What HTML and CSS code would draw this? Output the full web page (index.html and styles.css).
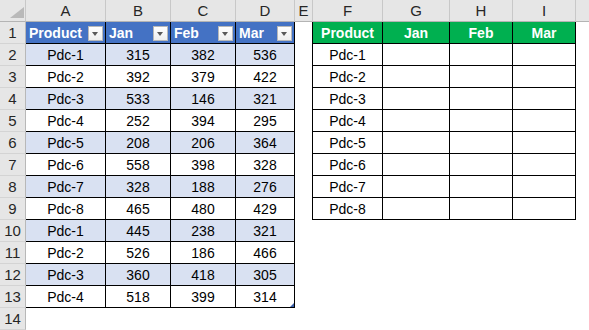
FILE: index.html
```html
<!DOCTYPE html>
<html>
<head>
<meta charset="utf-8">
<link rel="stylesheet" href="styles.css">
</head>
<body>
<div class="sheet">
  <!-- header row -->
  <div class="ch corner"><svg class="tri" width="14" height="11" viewBox="0 0 14 11"><polygon points="14,0 14,11 0,11" fill="#b9b9b9"/></svg></div>
  <div class="ch">A</div><div class="ch">B</div><div class="ch">C</div><div class="ch">D</div><div class="ch">E</div>
  <div class="ch">F</div><div class="ch">G</div><div class="ch">H</div><div class="ch">I</div><div class="ch last"></div>

  <!-- row 1 -->
  <div class="rh">1</div>
  <div class="th">Product<span class="fb"></span></div>
  <div class="th">Jan<span class="fb"></span></div>
  <div class="th">Feb<span class="fb"></span></div>
  <div class="th">Mar<span class="fb"></span></div>
  <div class="e edge"></div>
  <div class="gh">Product</div><div class="gh">Jan</div><div class="gh">Feb</div><div class="gh">Mar</div>
  <div class="e"></div>

  <div class="rh">2</div>
  <div class="c b">Pdc-1</div><div class="c b">315</div><div class="c b">382</div><div class="c b">536</div>
  <div class="e edge"></div><div class="r">Pdc-1</div><div class="r"></div><div class="r"></div><div class="r"></div><div class="e"></div>

  <div class="rh">3</div>
  <div class="c">Pdc-2</div><div class="c">392</div><div class="c">379</div><div class="c">422</div>
  <div class="e edge"></div><div class="r">Pdc-2</div><div class="r"></div><div class="r"></div><div class="r"></div><div class="e"></div>

  <div class="rh">4</div>
  <div class="c b">Pdc-3</div><div class="c b">533</div><div class="c b">146</div><div class="c b">321</div>
  <div class="e edge"></div><div class="r">Pdc-3</div><div class="r"></div><div class="r"></div><div class="r"></div><div class="e"></div>

  <div class="rh">5</div>
  <div class="c">Pdc-4</div><div class="c">252</div><div class="c">394</div><div class="c">295</div>
  <div class="e edge"></div><div class="r">Pdc-4</div><div class="r"></div><div class="r"></div><div class="r"></div><div class="e"></div>

  <div class="rh">6</div>
  <div class="c b">Pdc-5</div><div class="c b">208</div><div class="c b">206</div><div class="c b">364</div>
  <div class="e edge"></div><div class="r">Pdc-5</div><div class="r"></div><div class="r"></div><div class="r"></div><div class="e"></div>

  <div class="rh">7</div>
  <div class="c">Pdc-6</div><div class="c">558</div><div class="c">398</div><div class="c">328</div>
  <div class="e edge"></div><div class="r">Pdc-6</div><div class="r"></div><div class="r"></div><div class="r"></div><div class="e"></div>

  <div class="rh">8</div>
  <div class="c b">Pdc-7</div><div class="c b">328</div><div class="c b">188</div><div class="c b">276</div>
  <div class="e edge"></div><div class="r">Pdc-7</div><div class="r"></div><div class="r"></div><div class="r"></div><div class="e"></div>

  <div class="rh">9</div>
  <div class="c">Pdc-8</div><div class="c">465</div><div class="c">480</div><div class="c">429</div>
  <div class="e edge"></div><div class="r">Pdc-8</div><div class="r"></div><div class="r"></div><div class="r"></div><div class="e"></div>

  <div class="rh">10</div>
  <div class="c b">Pdc-1</div><div class="c b">445</div><div class="c b">238</div><div class="c b">321</div>
  <div class="e"></div><div class="e"></div><div class="e"></div><div class="e"></div><div class="e"></div><div class="e"></div>

  <div class="rh">11</div>
  <div class="c">Pdc-2</div><div class="c">526</div><div class="c">186</div><div class="c">466</div>
  <div class="e"></div><div class="e"></div><div class="e"></div><div class="e"></div><div class="e"></div><div class="e"></div>

  <div class="rh">12</div>
  <div class="c b">Pdc-3</div><div class="c b">360</div><div class="c b">418</div><div class="c b">305</div>
  <div class="e"></div><div class="e"></div><div class="e"></div><div class="e"></div><div class="e"></div><div class="e"></div>

  <div class="rh">13</div>
  <div class="c">Pdc-4</div><div class="c">518</div><div class="c">399</div><div class="c handle-cell">314<span class="handle"></span></div>
  <div class="e"></div><div class="e"></div><div class="e"></div><div class="e"></div><div class="e"></div><div class="e"></div>

  <div class="rh">14</div>
  <div class="e"></div><div class="e"></div><div class="e"></div><div class="e"></div><div class="e"></div>
  <div class="e"></div><div class="e"></div><div class="e"></div><div class="e"></div><div class="e"></div>
</div>
</body>
</html>
```

FILE: styles.css
```css
html, body {
  margin: 0;
  padding: 0;
  background: #ffffff;
}

.sheet {
  display: grid;
  grid-template-columns: 26px 80px 65px 65px 59px 18px 70px 67px 63px 63px 1fr;
  grid-template-rows: repeat(15, 22px);
  width: 589px;
  height: 330px;
  overflow: hidden;
  font-family: "Liberation Sans", Arial, sans-serif;
  font-size: 14px;
  color: #000;
}

.sheet > div {
  box-sizing: border-box;
  display: flex;
  align-items: center;
  justify-content: center;
  white-space: nowrap;
}

.ch {
  background: #e6e6e6;
  border-right: 1px solid #c8c8c8;
  border-bottom: 1px solid #b4b4b4;
  color: #262626;
  font-size: 15px;
}

.ch.last {
  border-right: none;
}

.corner {
  position: relative;
}

.corner .tri {
  position: absolute;
  left: 10px;
  top: 7px;
}

.rh {
  background: #e6e6e6;
  border-right: 1px solid #b8b8b8;
  border-bottom: 1px solid #d4d4d4;
  color: #262626;
  font-size: 15px;
}

.th {
  background: #4472c4;
  color: #ffffff;
  font-weight: bold;
  border-right: 1px solid #000;
  border-bottom: 1px solid #000;
  justify-content: space-between !important;
  padding: 0 2px 0 3px;
}

.fb {
  width: 15px;
  height: 15px;
  box-sizing: border-box;
  background: linear-gradient(#ffffff, #eeeeee);
  border: 1px solid #b8b8b8;
  position: relative;
  margin-top: 1px;
}

.fb::after {
  content: "";
  position: absolute;
  left: 3px;
  top: 5px;
  border-left: 3.5px solid transparent;
  border-right: 3.5px solid transparent;
  border-top: 4px solid #595959;
}

.c {
  background: #ffffff;
  border-right: 1px solid #000;
  border-bottom: 1px solid #000;
}

.c.b {
  background: #d9e1f2;
}

.handle-cell {
  position: relative;
}

.handle {
  position: absolute;
  right: 0;
  bottom: 0;
  width: 0;
  height: 0;
  border-left: 4px solid transparent;
  border-bottom: 4px solid #3a5fa8;
}

.e {
  background: #ffffff;
}

.e.edge {
  border-right: 1px solid #000;
}

.gh {
  background: #00b050;
  color: #ffffff;
  font-weight: bold;
  border-right: 1px solid #000;
  border-bottom: 1px solid #000;
}

.r {
  background: #ffffff;
  border-right: 1px solid #000;
  border-bottom: 1px solid #000;
}
```
